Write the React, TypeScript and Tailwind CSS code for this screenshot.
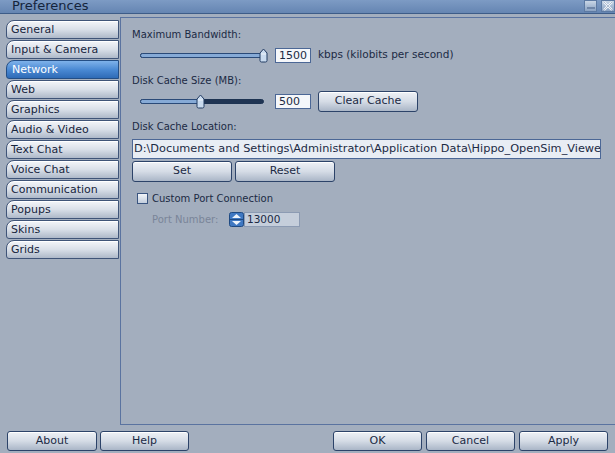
import { useState } from 'react'

const tabs = [
	'General',
	'Input & Camera',
	'Network',
	'Web',
	'Graphics',
	'Audio & Video',
	'Text Chat',
	'Voice Chat',
	'Communication',
	'Popups',
	'Skins',
	'Grids',
]

function Thumb() {
	return (
		<svg width="9" height="15" viewBox="0 0 9 15" className="absolute top-[-5px]">
			<path d="M1 5 L4.5 1 L8 5 L8 12.5 Q8 14 6.5 14 L2.5 14 Q1 14 1 12.5 Z" fill="#c9dbef" stroke="#233c63" strokeWidth="1" />
			<path d="M2 6 L7 6" stroke="#eef4fb" strokeWidth="1" />
		</svg>
	)
}

function Slider({ pos }: { pos: number }) {
	return (
		<div className="relative w-[124px] h-[5px] ml-[8px]">
			<div className="absolute inset-0 rounded-full bg-[#1f3453] border border-[#1d3352]" />
			<div
				className="absolute left-0 top-0 h-[5px] rounded-full bg-[#86aad6] border border-[#2a4a78]"
				style={{ width: pos + 4 }}
			/>
			<div className="absolute top-0" style={{ left: pos - 4 }}>
				<Thumb />
			</div>
		</div>
	)
}

function Button({ label, w, h = 21 }: { label: string; w: number; h?: number }) {
	return (
		<div
			className="flex items-center justify-center rounded-[3px] border border-[#2c4369] bg-gradient-to-b from-[#eef1f6] via-[#d5dce6] to-[#aab6c7] text-[11px] text-[#1b2a44] shadow-[inset_0_1px_0_#ffffff]"
			style={{ width: w, height: h }}
		>
			{label}
		</div>
	)
}

function Tab({ label, active }: { label: string; active: boolean }) {
	return (
		<div
			className={
				active
					? 'h-[19px] w-[113px] mb-px rounded-tl-[8px] rounded-bl-[3px] border border-[#244e85] bg-gradient-to-b from-[#7fb2ea] via-[#4b8ad4] to-[#2f6bb6] pl-[5px] text-[11px] leading-[17px] text-white'
					: 'h-[19px] w-[113px] mb-px rounded-tl-[8px] rounded-bl-[3px] border border-[#3f5478] bg-gradient-to-b from-[#f3f5f9] via-[#d9dfe8] to-[#aeb9c9] pl-[4px] text-[11px] leading-[17px] text-[#17253d] shadow-[inset_0_1px_0_#ffffff]'
			}
		>
			{label}
		</div>
	)
}

export default function App() {
	const [current] = useState('Network')

	return (
		<div className="w-[615px] h-[453px] overflow-hidden bg-[#a3aebe] font-['DejaVu_Sans',sans-serif] text-[#1b2a44] flex flex-col">
			{/* title bar */}
			<div className="h-[14px] shrink-0 bg-gradient-to-b from-[#7d9bc4] to-[#6585b2] border-b border-[#3d5c88] flex items-end overflow-hidden relative">
				<div className="pl-[12px] text-[13px] leading-[13px] text-[#14243c] mb-[1px]">Preferences</div>
				<div className="absolute right-[18px] top-0 w-[13px] h-[12px] bg-gradient-to-b from-[#c9d6e6] to-[#8aa2c3] border border-[#5d7aa3] flex items-end justify-center pb-[2px]">
					<div className="w-[8px] h-[2px] bg-[#f3f6fa] border border-[#6f86a8]" />
				</div>
				<div className="absolute right-0 top-0 w-[14px] h-[12px] bg-gradient-to-b from-[#c9d6e6] to-[#8aa2c3] border border-[#5d7aa3] flex items-center justify-center">
					<svg width="10" height="10" viewBox="0 0 10 10">
						<path d="M1 1 L9 9 M9 1 L1 9" stroke="#f6f8fb" strokeWidth="2.2" />
						<path d="M1 1 L9 9 M9 1 L1 9" stroke="#7c93b5" strokeWidth="0.6" />
					</svg>
				</div>
			</div>

			<div className="flex flex-1 min-h-0">
				{/* tabs */}
				<div className="w-[120px] shrink-0 pt-[6px] pl-[6px]">
					{tabs.map((t) => (
						<Tab key={t} label={t} active={t === current} />
					))}
				</div>

				{/* network panel */}
				<div className="flex-1 mt-[3px] border-l border-t border-b border-[#5a73a0] pl-[11px] pt-[11px] text-[10px]">
					<div className="h-[12px] leading-[12px]">Maximum Bandwidth:</div>
					<div className="mt-[7px] h-[14px] flex items-center">
						<Slider pos={123} />
						<div className="ml-[11px] w-[36px] h-[15px] bg-[#f5f7fa] border border-[#4b6796] text-[11px] leading-[13px] pl-[3px]">1500</div>
						<div className="ml-[7px] text-[10.5px]">kbps (kilobits per second)</div>
					</div>

					<div className="mt-[13px] h-[12px] leading-[12px]">Disk Cache Size (MB):</div>
					<div className="mt-[4px] h-[21px] flex items-center">
						<Slider pos={60} />
						<div className="ml-[11px] w-[36px] h-[15px] bg-[#f5f7fa] border border-[#4b6796] text-[11px] leading-[13px] pl-[3px]">500</div>
						<div className="ml-[7px]">
							<Button label="Clear Cache" w={100} />
						</div>
					</div>

					<div className="mt-[9px] h-[12px] leading-[12px]">Disk Cache Location:</div>
					<div className="mt-[6px] w-[469px] h-[20px] bg-[#e8edf4] border border-[#4b6796] text-[11.3px] leading-[18px] pl-[1px] whitespace-nowrap overflow-hidden">
						D:\Documents and Settings\Administrator\Application Data\Hippo_OpenSim_Viewe
					</div>
					<div className="mt-[2px] flex gap-[3px]">
						<Button label="Set" w={100} />
						<Button label="Reset" w={100} />
					</div>

					<div className="mt-[10px] flex items-center h-[12px] ml-[5px]">
						<div className="w-[11px] h-[11px] border border-[#3a5580] bg-gradient-to-b from-[#f2f5f9] to-[#c3cedd]" />
						<div className="ml-[4px] text-[10px]">Custom Port Connection</div>
					</div>

					<div className="mt-[8px] flex items-center h-[15px] ml-[20px]">
						<div className="text-[10px] text-[#7a8599] w-[77px]">Port Number:</div>
						<svg width="15" height="15" viewBox="0 0 15 15">
							<rect x="0.5" y="0.5" width="14" height="14" rx="2" fill="#3f78c2" stroke="#1f4a82" />
							<path d="M3 6 L7.5 2 L12 6 Z" fill="#eef4fb" />
							<path d="M3 9 L7.5 13 L12 9 Z" fill="#eef4fb" />
							<path d="M1 7.5 L14 7.5" stroke="#1f4a82" />
						</svg>
						<div className="w-[56px] h-[15px] bg-[#c5cedb] border border-[#8c9bb3] text-[10.5px] leading-[13px] pl-[2px]">13000</div>
					</div>
				</div>
			</div>

			{/* bottom buttons */}
			<div className="h-[28px] shrink-0 flex items-start pt-[6px] pl-[7px] pr-[7px]">
				<div className="flex gap-[3px]">
					<Button label="About" w={90} h={20} />
					<Button label="Help" w={89} h={20} />
				</div>
				<div className="ml-auto flex gap-[4px]">
					<Button label="OK" w={89} h={20} />
					<Button label="Cancel" w={89} h={20} />
					<Button label="Apply" w={89} h={20} />
				</div>
			</div>
		</div>
	)
}
